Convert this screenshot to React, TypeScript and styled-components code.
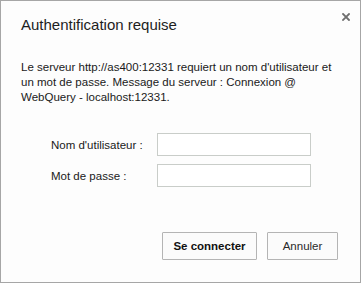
import React from 'react';
import styled, { createGlobalStyle } from 'styled-components';

const GlobalStyle = createGlobalStyle`
  html, body {
    margin: 0;
    padding: 0;
    background: #ffffff;
  }
  body {
    font-family: "Liberation Sans", Arial, sans-serif;
    color: #222222;
  }
`;

const Dialog = styled.div`
  box-sizing: border-box;
  width: 361px;
  height: 283px;
  border: 1px solid #a6a6a6;
  background: #fdfdfd;
  display: flex;
  flex-direction: column;
`;

const Header = styled.div`
  display: flex;
  justify-content: space-between;
  align-items: flex-start;
  padding: 14px 10px 0 20px;
`;

const Title = styled.h1`
  margin: 0;
  font-size: 15px;
  line-height: 20px;
  font-weight: normal;
  color: #1e1e1e;
`;

const CloseButton = styled.button`
  border: 0;
  background: none;
  padding: 0;
  margin-top: -2px;
  width: 8px;
  height: 8px;
  display: flex;
  cursor: pointer;
`;

const Message = styled.p`
  margin: 25px 20px 0 20px;
  font-size: 11.5px;
  line-height: 15px;
  color: #1a1a1a;
`;

const Form = styled.div`
  display: grid;
  grid-template-columns: 106px 154px;
  row-gap: 8px;
  align-items: center;
  margin: 28px 0 0 50px;
`;

const Label = styled.label`
  font-size: 11.5px;
  color: #1a1a1a;
`;

const Input = styled.input`
  box-sizing: border-box;
  width: 154px;
  height: 23px;
  border: 1px solid #c9cdc9;
  background: #ffffff;
  margin: 0;
  padding: 2px 4px;
  font: inherit;
  outline: none;
`;

const Footer = styled.div`
  display: flex;
  justify-content: flex-end;
  gap: 10px;
  margin-top: auto;
  padding: 0 22px 22px 0;
`;

const Button = styled.button<{ primary?: boolean }>`
  box-sizing: border-box;
  height: 28px;
  min-width: ${p => (p.primary ? '95px' : '71px')};
  padding: 0 10px;
  border: 1px solid #b4b4b4;
  border-radius: 1px;
  background: #fbfbfb;
  font-family: "Liberation Sans", Arial, sans-serif;
  font-size: 11.5px;
  font-weight: ${p => (p.primary ? 'bold' : 'normal')};
  color: ${p => (p.primary ? '#111111' : '#2a2a2a')};
  cursor: pointer;
`;

const App: React.FC = () => (
  <>
    <GlobalStyle />
    <Dialog>
      <Header>
        <Title>Authentification requise</Title>
        <CloseButton aria-label="Fermer">
          <svg width="8" height="8" viewBox="0 0 8 8">
            <path d="M1 1 L7 7 M7 1 L1 7" stroke="#6f6f6f" strokeWidth="1.8" strokeLinecap="square" />
          </svg>
        </CloseButton>
      </Header>
      <Message>
        Le serveur http://as400:12331 requiert un nom d'utilisateur et un mot de passe. Message du serveur : Connexion @ WebQuery - localhost:12331.
      </Message>
      <Form>
        <Label htmlFor="user">Nom d'utilisateur :</Label>
        <Input id="user" type="text" />
        <Label htmlFor="pass">Mot de passe :</Label>
        <Input id="pass" type="password" />
      </Form>
      <Footer>
        <Button primary>Se connecter</Button>
        <Button>Annuler</Button>
      </Footer>
    </Dialog>
  </>
);

export default App;
